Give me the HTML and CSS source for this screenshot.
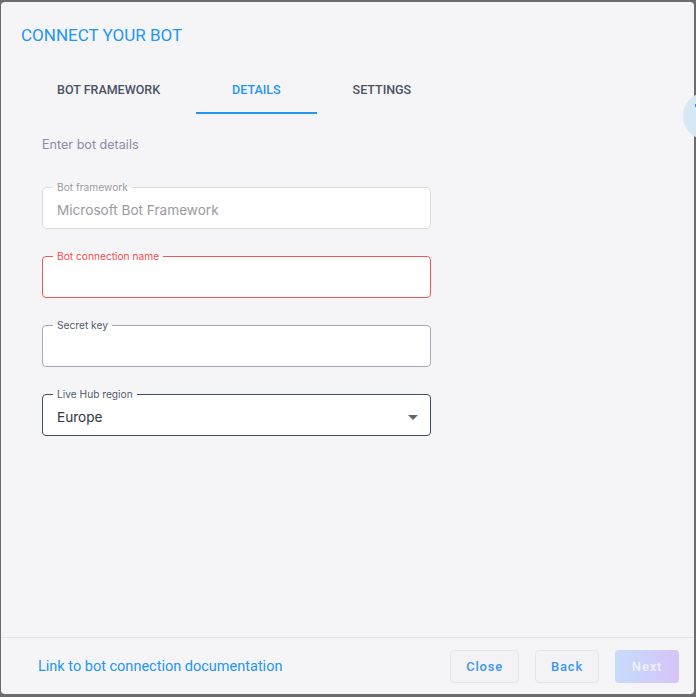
FILE: index.html
```html
<!DOCTYPE html>
<html lang="en">
<head>
    <meta charset="UTF-8">
    <meta name="viewport" content="width=device-width, initial-scale=1.0">
    <title>Connect your bot</title>
    <link rel="stylesheet" href="styles.css">
</head>
<body>

    <div class="dialog">
        <h2 class="dialog-title">CONNECT YOUR BOT</h2>

        <div class="tabs">
            <div class="tab">BOT FRAMEWORK</div>
            <div class="tab active">DETAILS</div>
            <div class="tab">SETTINGS</div>
        </div>

        <div class="dialog-content">
            <p class="hint">Enter bot details</p>

            <div class="fields">
                <fieldset class="field disabled">
                    <legend>Bot framework</legend>
                    <input type="text" value="Microsoft Bot Framework" readonly>
                </fieldset>

                <fieldset class="field error">
                    <legend>Bot connection name</legend>
                    <input type="text">
                </fieldset>

                <fieldset class="field">
                    <legend>Secret key</legend>
                    <input type="text">
                </fieldset>

                <fieldset class="field focused">
                    <legend>Live Hub region</legend>
                    <div class="select">
                        <span>Europe</span>
                        <svg class="caret" width="10" height="5" viewBox="0 0 10 5"><path d="M0 0h10L5 5z" fill="#666"/></svg>
                    </div>
                </fieldset>
            </div>
        </div>

        <div class="dialog-footer">
            <a class="doc-link" href="#">Link to bot connection documentation</a>
            <div class="actions">
                <button class="btn">Close</button>
                <button class="btn">Back</button>
                <button class="btn primary" disabled>Next</button>
            </div>
        </div>
    </div>

    <!-- bouton d'aide qui depasse sur la modale -->
    <div class="help-bubble"><div class="help-circle"><span></span></div></div>

</body>
</html>
```

FILE: styles.css
```css
body {
    margin: 0;
    padding: 0;
    background-color: #6c6c6e;
    font-family: Roboto, "Liberation Sans", sans-serif;
    overflow: hidden;
}

.dialog {
    margin: 2px 2px 0 1px;
    height: 692px;
    background-color: #f5f5f8;
    border-radius: 4px;
    display: flex;
    flex-direction: column;
    box-sizing: border-box;
}

.dialog-title {
    margin: 0;
    padding: 23px 20px 0;
    font-size: 17px;
    line-height: 20px;
    font-weight: 400;
    color: #2196f3;
}

.tabs {
    display: flex;
    margin: 21px 0 0 20px;
}

.tab {
    height: 48px;
    padding: 0 36px;
    display: flex;
    align-items: center;
    font-size: 12.5px;
    font-weight: 500;
    color: #4a5263;
    box-sizing: border-box;
    border-bottom: 2px solid transparent;
}

.tab.active {
    color: #2196f3;
    border-bottom-color: #2196f3;
}

.dialog-content {
    flex: 1;
    padding: 0 0 0 41px;
}

.hint {
    margin: 23px 0 0;
    font-family: Inter, "Noto Sans", sans-serif;
    font-size: 12.6px;
    line-height: 16px;
    color: #8c8aa6;
}

.fields {
    display: flex;
    flex-direction: column;
    gap: 21px;
    margin-top: 28px;
}

.field {
    margin: 0;
    width: 389px;
    box-sizing: border-box;
    padding: 7px 10px 8px;
    border: 1px solid #a3a9b8;
    border-radius: 4px;
    background-color: #fff;
    font-family: Inter, "Noto Sans", sans-serif;
    min-width: 0;
}

.field legend {
    padding: 0 4px;
    font-size: 10.2px;
    line-height: 12px;
    color: #525a6a;
}

.field input {
    display: block;
    width: 100%;
    height: 20px;
    padding: 0 4px;
    border: none;
    outline: none;
    background: transparent;
    font-family: Inter, "Noto Sans", sans-serif;
    font-size: 13.6px;
    color: #2d3442;
    box-sizing: border-box;
}

.field.disabled {
    border-color: #d9d9e2;
}

.field.disabled legend,
.field.disabled input {
    color: #9a9a9e;
}

.field.error {
    border-color: #f25555;
}

.field.error legend {
    color: #ef4a4a;
}

.field.focused {
    border-color: #3f4b5e;
}

.select {
    height: 20px;
    padding: 0 2px 0 4px;
    display: flex;
    align-items: center;
    justify-content: space-between;
    font-size: 13.6px;
    color: #2d3442;
}

.caret {
    margin-top: 1px;
}

.dialog-footer {
    height: 57px;
    border-top: 1px solid #e3e3e9;
    display: flex;
    align-items: center;
    justify-content: space-between;
    padding: 0 15px 0 37px;
    box-sizing: border-box;
}

.doc-link {
    font-size: 14.5px;
    color: #2196f3;
    text-decoration: none;
}

.actions {
    display: flex;
    gap: 16px;
}

.btn {
    height: 33px;
    min-width: 64px;
    padding: 0 15px;
    background-color: #f3f3f6;
    border: 1px solid #e4e4ea;
    border-radius: 4px;
    font-family: Roboto, "Liberation Sans", sans-serif;
    font-size: 13px;
    font-weight: 500;
    letter-spacing: 0.8px;
    color: #3d95ee;
    cursor: pointer;
}

.btn.primary {
    border: none;
    background: linear-gradient(90deg, #c6dcfb, #d7c3f8);
    color: #eef0fb;
    cursor: default;
}

.help-bubble {
    position: absolute;
    left: 683px;
    top: 92px;
    width: 13px;
    height: 48px;
    overflow: hidden;
}

.help-circle {
    position: relative;
    width: 48px;
    height: 48px;
    border-radius: 50%;
    background-color: #d6e8f4;
}

.help-circle span {
    position: absolute;
    left: 12px;
    top: 12px;
    width: 6px;
    height: 3px;
    background-color: #2a8be8;
}
```
